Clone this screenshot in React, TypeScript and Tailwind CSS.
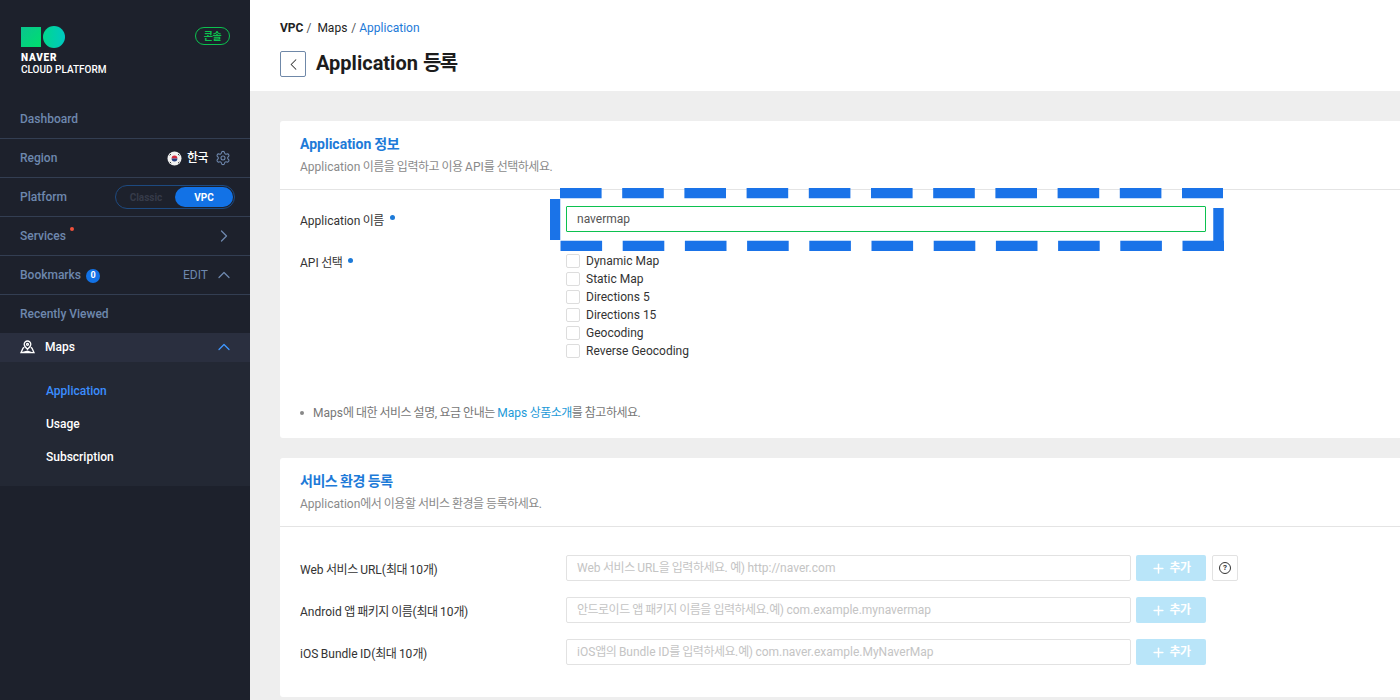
import { ChevronLeft, ChevronRight, ChevronUp, Plus, Settings } from "lucide-react";

const apis = ["Dynamic Map", "Static Map", "Directions 5", "Directions 15", "Geocoding", "Reverse Geocoding"];

const urlRows = [
  { label: "Web 서비스 URL(최대 10개)", placeholder: "Web 서비스 URL을 입력하세요. 예) http://naver.com", help: true },
  { label: "Android 앱 패키지 이름(최대 10개)", placeholder: "안드로이드 앱 패키지 이름을 입력하세요.예) com.example.mynavermap", help: false },
  { label: "iOS Bundle ID(최대 10개)", placeholder: "iOS앱의 Bundle ID를 입력하세요.예) com.naver.example.MyNaverMap", help: false },
];

// hangul in the reference is set a bit tighter than Noto's default
const Ko = ({ t }: { t: string }) => (
  <>
    {t.split(/([가-힣 ]+)/).map((part, i) =>
      i % 2 ? (
        <span key={i} className="tracking-[-0.5px] whitespace-pre">
          {part}
        </span>
      ) : (
        part
      ),
    )}
  </>
);

const Flag = () => (
  <svg width="15" height="15" viewBox="0 0 15 15">
    <circle cx="7.5" cy="7.5" r="7" fill="#f1f1f1" />
    <path d="M4.6 7.5a2.9 2.9 0 0 1 5.8 0z" fill="#d5283c" />
    <path d="M4.6 7.5a2.9 2.9 0 0 0 5.8 0z" fill="#28407f" />
    <path d="M2.6 4.4l1.4-1.3M2.9 11l1.3 1.2M11 3.1l1.4 1.3M11 12.2l1.3-1.2" stroke="#333" strokeWidth="1" />
  </svg>
);

const Sidebar = () => (
  <aside className="w-[250px] h-[700px] shrink-0 bg-[#1d212c] text-[#6e88ae] text-[12px] font-medium">
    <div className="h-[100px] pl-[21px] pr-[20px] pt-[26px] flex justify-between items-start">
      <div>
        <div className="flex items-center gap-[2px]">
          <div className="w-[20px] h-[20px] bg-gradient-to-br from-[#0bc58f] to-[#00e06b]" />
          <div className="w-[22px] h-[22px] rounded-full bg-gradient-to-r from-[#00d88c] to-[#00c8c0]" />
        </div>
        <div className="mt-[5px] text-white text-[10px] leading-[10px] font-black tracking-[0.8px]">NAVER</div>
        <div className="mt-[1px] text-white text-[10px] leading-[11px] font-medium">CLOUD PLATFORM</div>
      </div>
      <div className="w-[35px] h-[18px] mt-[1px] rounded-full border border-[#0cc14f] text-[#0cc14f] text-[10px] font-bold flex items-center justify-center">
        <Ko t="콘솔" />
      </div>
    </div>

    <div className="h-[39px] flex items-center px-[20px] border-b border-[#333e52]">Dashboard</div>
    <div className="h-[39px] flex items-center justify-between px-[20px] border-b border-[#333e52]">
      <span>Region</span>
      <span className="flex items-center">
        <Flag />
        <span className="ml-[5px] mr-[7px] text-white text-[12px]">
          <Ko t="한국" />
        </span>
        <Settings size={16} strokeWidth={1.6} className="-mr-[1px]" />
      </span>
    </div>
    <div className="h-[39px] flex items-center justify-between pl-[20px] pr-[15px] border-b border-[#333e52]">
      <span>Platform</span>
      <div className="w-[120px] h-[24px] rounded-full border border-[#1d4a80] flex items-center p-[1px]">
        <span className="flex-1 text-center text-[10px] font-bold text-[#363b49]">Classic</span>
        <span className="w-[58px] h-[20px] rounded-full bg-[#1272e6] text-white text-[10px] font-bold flex items-center justify-center">
          VPC
        </span>
      </div>
    </div>
    <div className="h-[39px] flex items-center justify-between pl-[20px] pr-[16px] border-b border-[#333e52]">
      <span className="relative">
        Services
        <span className="absolute -right-[8px] top-[0px] w-[4px] h-[4px] rounded-full bg-[#f0513c]" />
      </span>
      <ChevronRight size={20} strokeWidth={1.5} />
    </div>
    <div className="h-[39px] flex items-center justify-between pl-[20px] pr-[16px] border-b border-[#333e52]">
      <span className="flex items-center">
        Bookmarks
        <span className="ml-[5px] mt-[1px] w-[14px] h-[14px] rounded-full bg-[#1272e6] text-white text-[9px] font-bold flex items-center justify-center">
          0
        </span>
      </span>
      <span className="flex items-center font-normal">
        EDIT
        <ChevronUp size={20} strokeWidth={1.5} className="ml-[6px]" />
      </span>
    </div>
    <div className="h-[38px] flex items-center px-[20px]">Recently Viewed</div>

    <div className="h-[29px] pb-[2px] bg-[#2a2f3f] flex items-center justify-between pl-[20px] pr-[16px] text-white">
      <span className="flex items-center">
        <svg width="15" height="14" viewBox="0 0 15 14" fill="none" stroke="#fff" strokeWidth="1.3">
          <path d="M7.5 1a3.3 3.3 0 0 1 3.3 3.3c0 2-2 3.9-3.3 5-1.3-1.1-3.3-3-3.3-5A3.3 3.3 0 0 1 7.5 1z" />
          <circle cx="7.5" cy="4.3" r="1" />
          <path d="M4.2 7.2L3 8.2 1 12.7h13l-2-4.5-1.2-1M2 12.7l5.5-1.5 4 1.5" />
        </svg>
        <span className="ml-[10px]">Maps</span>
      </span>
      <ChevronUp size={20} strokeWidth={1.5} className="text-[#3f97ff]" />
    </div>
    <div className="h-[124px] bg-[#232834] pt-[12px] pl-[46px] text-white">
      <div className="h-[33px] flex items-center text-[#3b8dff]">Application</div>
      <div className="h-[33px] flex items-center">Usage</div>
      <div className="h-[33px] flex items-center">Subscription</div>
    </div>
  </aside>
);

const Main = () => (
  <main className="flex-1 min-w-0 h-[700px] overflow-hidden bg-[#eeeeee] relative">
    <header className="h-[91px] bg-white pl-[30px] pt-[20px]">
      <div className="h-[16px] flex items-center text-[12px] text-[#222]">
        <b className="font-bold">VPC</b>
        <span className="ml-[3px] text-[#555]">/</span>
        <span className="ml-[6px]">Maps</span>
        <span className="ml-[4px] text-[#555]">/</span>
        <span className="ml-[3px] text-[#1d7ad8]">Application</span>
      </div>
      <div className="mt-[15px] flex items-center">
        <button className="w-[26px] h-[26px] rounded-[2px] border border-[#6f88a8] flex items-center justify-center text-[#333]">
          <ChevronLeft size={19} strokeWidth={1.3} />
        </button>
        <h1 className="ml-[10px] -mt-[2px] text-[20px] leading-[26px] font-bold text-[#1c1c1c]">
          Application <span className="tracking-[-1.5px]">등록</span>
        </h1>
      </div>
    </header>

    <div className="pl-[30px] pt-[30px] w-[1300px]">
      <section className="h-[317px] bg-white rounded-[3px]">
        <div className="h-[69px] px-[20px] pt-[14px] border-b border-[#e4e4e4]">
          <h2 className="text-[14px] leading-[18px] font-bold text-[#1d7ad8]">
            <Ko t="Application 정보" />
          </h2>
          <p className="mt-[6px] text-[12px] leading-[16px] text-[#8a8a8a]">
            <Ko t="Application 이름을 입력하고 이용 API를 선택하세요." />
          </p>
        </div>
        <div className="px-[20px] flex">
          <div className="w-[266px] shrink-0 pt-[18px] text-[12px] text-[#333]">
            <div className="h-[26px] flex items-center">
              <Ko t="Application 이름" />
              <span className="ml-[6px] -mt-[8px] w-[5px] h-[5px] rounded-full bg-[#1d7ad8]" />
            </div>
            <div className="mt-[21px] h-[16px] flex items-center">
              <Ko t="API 선택" />
              <span className="ml-[6px] -mt-[6px] w-[5px] h-[5px] rounded-full bg-[#1d7ad8]" />
            </div>
          </div>
          <div className="pt-[16px]">
            <div className="w-[640px] h-[26px] border border-[#0cc14f] rounded-[1px] px-[10px] flex items-center text-[12px] text-[#555]">
              navermap
            </div>
            <div className="mt-[20px]">
              {apis.map((api) => (
                <label key={api} className="h-[18px] flex items-center text-[12px] text-[#333]">
                  <span className="w-[14px] h-[14px] rounded-[2px] border border-[#dddddd] bg-white" />
                  <span className="ml-[6px]">{api}</span>
                </label>
              ))}
            </div>
          </div>
        </div>
        <div className="mt-[45px] pl-[20px] flex items-center text-[12px] leading-[16px] text-[#777]">
          <span className="w-[4px] h-[4px] rounded-full bg-[#888] mr-[9px]" />
          <span>
            <Ko t="Maps에 대한 서비스 설명, 요금 안내는 " />
            <span className="text-[#1d9ad8]">
              <Ko t="Maps 상품소개" />
            </span>
            <Ko t="를 참고하세요." />
          </span>
        </div>
      </section>

      <section className="mt-[20px] h-[239px] bg-white rounded-[3px]">
        <div className="h-[69px] px-[20px] pt-[14px] border-b border-[#e4e4e4]">
          <h2 className="text-[14px] leading-[18px] font-bold text-[#1d7ad8]">
            <Ko t="서비스 환경 등록" />
          </h2>
          <p className="mt-[6px] text-[12px] leading-[16px] text-[#8a8a8a]">
            <Ko t="Application에서 이용할 서비스 환경을 등록하세요." />
          </p>
        </div>
        <div className="pl-[20px] pt-[28px] flex flex-col gap-[16px]">
          {urlRows.map((row) => (
            <div key={row.label} className="h-[26px] flex items-center text-[12px]">
              <div className="w-[266px] shrink-0 pt-[4px] text-[#333]">
                <Ko t={row.label} />
              </div>
              <div className="w-[565px] h-[26px] border border-[#e2e2e2] rounded-[2px] px-[10px] flex items-center text-[#c4c4c4]">
                <span>
                  <Ko t={row.placeholder} />
                </span>
              </div>
              <button className="ml-[5px] w-[70px] h-[26px] rounded-[2px] bg-[#b9e5f9] text-white font-bold flex items-center justify-center">
                <Plus size={15} strokeWidth={2.4} />
                <span className="ml-[3px]">
                  <Ko t="추가" />
                </span>
              </button>
              {row.help && (
                <span className="ml-[6px] w-[26px] h-[26px] rounded-[2px] border border-[#e2e2e2] flex items-center justify-center">
                  <span className="w-[12px] h-[12px] rounded-full border-[1.5px] border-[#333] text-[8px] leading-none font-bold text-[#333] flex items-center justify-center">
                    ?
                  </span>
                </span>
              )}
            </div>
          ))}
        </div>
      </section>
    </div>

    {/* blue dashed annotation drawn over the name input */}
    <svg className="absolute left-[300px] top-[188px]" width="674" height="63" viewBox="0 0 674 63" fill="none" stroke="#1a73e8" strokeWidth="10.5">
      <path d="M10 5H673" strokeDasharray="41.6 20.6" />
      <path d="M5 11V52" />
      <path d="M10.5 58H674" strokeDasharray="41.6 20.6" />
      <path d="M668.5 20V63" />
    </svg>
  </main>
);

export default function App() {
  return (
    <div className="w-[1400px] h-[700px] overflow-hidden flex font-['Roboto','Noto_Sans_CJK_KR',sans-serif]">
      <Sidebar />
      <Main />
    </div>
  );
}
